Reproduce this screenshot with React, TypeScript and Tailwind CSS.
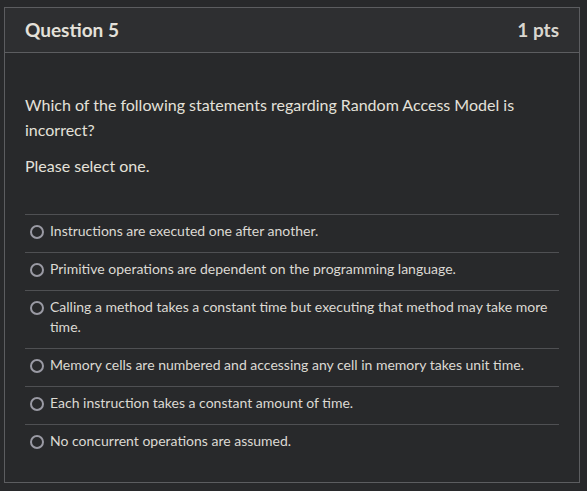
const answers = [
  'Instructions are executed one after another.',
  'Primitive operations are dependent on the programming language.',
  'Calling a method takes a constant time but executing that method may take more time.',
  'Memory cells are numbered and accessing any cell in memory takes unit time.',
  'Each instruction takes a constant amount of time.',
  'No concurrent operations are assumed.',
];

function Radio() {
  return (
    <span className="mt-[4px] flex h-[14px] w-[14px] shrink-0 rounded-full border-2 border-[#9a9aa4]" />
  );
}

export default function App() {
  return (
    <div
      className="min-h-screen w-[587px] h-[491px] bg-[#28292b] pt-[7px] pl-[4px]"
      style={{ fontFamily: 'Lato, "Open Sans", sans-serif' }}
    >
      <div className="flex h-[476px] w-[576px] flex-col border border-[#5c5d60] bg-[#28292b]">
        <div className="flex h-[45px] items-center justify-between border-b border-[#5c5d60] bg-[#2e2f31] px-5">
          <h2 className="text-[19px] font-bold text-[#e4e1da]">Question 5</h2>
          <span className="text-[19px] font-bold text-[#d9d6cf]">1 pts</span>
        </div>

        <div className="px-5 pt-[39px]">
          <p className="text-[16px] leading-[25px] text-[#e4e1da]">
            Which of the following statements regarding Random Access Model is incorrect?
          </p>
          <p className="mt-[11px] text-[16px] leading-[25px] text-[#e4e1da]">Please select one.</p>

          <div className="mt-[36px]">
            {answers.map((a, i) => (
              <div
                key={i}
                className="flex gap-[6px] border-t border-[#4f5053] pl-[5px] pr-[4px] pt-[6px] pb-[11px]"
              >
                <Radio />
                <span className="text-[14px] leading-[20px] text-[#dcd9d3]">{a}</span>
              </div>
            ))}
          </div>
        </div>
      </div>
    </div>
  );
}
